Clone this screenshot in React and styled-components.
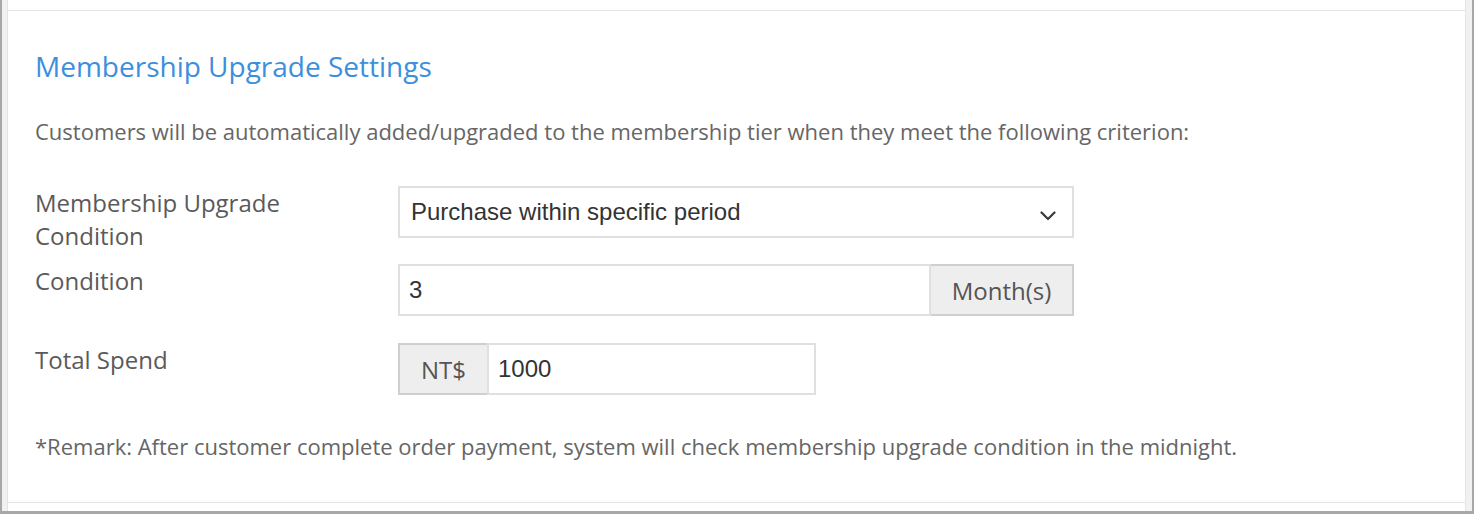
import React from 'react'
import styled, { createGlobalStyle } from 'styled-components'

const GlobalStyle = createGlobalStyle`
  html, body {
    margin: 0;
    padding: 0;
    background: #ffffff;
  }
  * {
    box-sizing: border-box;
  }
`

const Frame = styled.div`
  width: 1474px;
  height: 514px;
  overflow: hidden;
  background: #f1f1f1;
  border-left: 2px solid #a8a8a8;
  border-right: 2px solid #a8a8a8;
  border-bottom: 3px solid #a8a8a8;
  padding: 0 6px 0 5px;
  font-family: 'Open Sans', 'Liberation Sans', sans-serif;
`

const Card = styled.div`
  height: 100%;
  background: #ffffff;
  border-left: 1px solid #e4e4e4;
  border-right: 1px solid #e4e4e4;
`

const PrevSection = styled.div`
  height: 11px;
  border-bottom: 1px solid #e4e4e4;
`

const Section = styled.section`
  padding: 37px 27px 0;
  height: 492px;
  border-bottom: 1px solid #e4e4e4;
`

const Title = styled.h2`
  margin: 0;
  font-size: 28px;
  font-weight: 400;
  line-height: 36px;
  color: #3d8fdc;
`

const Description = styled.p`
  margin: 32px 0 0;
  font-size: 22px;
  line-height: 30px;
  color: #666666;
`

const Form = styled.div`
  margin-top: 40px;
  display: flex;
  flex-direction: column;
`

const Row = styled.div`
  display: flex;
  align-items: flex-start;
  margin-bottom: ${p => p.$gap || 0}px;
`

const Label = styled.div`
  width: 363px;
  flex-shrink: 0;
  font-size: 24px;
  line-height: 33px;
  color: #5a5a5a;
`

const Select = styled.div`
  width: 676px;
  height: 52px;
  display: flex;
  align-items: center;
  justify-content: space-between;
  padding: 0 16px 0 11px;
  border: 2px solid #e0e0e0;
  background: #ffffff;
  font-family: 'Liberation Sans', Arial, sans-serif;
  font-size: 24px;
  color: #333333;
`

const ChevronBox = styled.span`
  display: flex;
  margin-top: 8px;
`

const Group = styled.div`
  display: flex;
  width: ${p => p.$width}px;
  height: 52px;
`

const Input = styled.div`
  flex: 1;
  display: flex;
  align-items: center;
  padding: 0 9px;
  border: 2px solid #e0e0e0;
  background: #ffffff;
  font-family: 'Liberation Sans', Arial, sans-serif;
  font-size: 24px;
  color: #333333;
`

const Addon = styled.div`
  width: ${p => p.$width}px;
  flex-shrink: 0;
  display: flex;
  align-items: center;
  justify-content: center;
  background: #eeeeee;
  border: 2px solid #cfcfcf;
  ${p => (p.$side === 'left' ? 'border-right: none;' : 'border-left: none;')}
  font-size: 24px;
  color: #555555;
`

const Remark = styled.p`
  margin: 36px 0 0;
  font-size: 22px;
  line-height: 30px;
  color: #666666;
`

const Chevron = () => (
  <ChevronBox>
    <svg width="16" height="10" viewBox="0 0 16 10" fill="none">
      <path d="M1.5 1.5 L8 8 L14.5 1.5" stroke="#3a3a3a" strokeWidth="2.2" strokeLinecap="round" strokeLinejoin="round" />
    </svg>
  </ChevronBox>
)

export default function App() {
  return (
    <>
      <GlobalStyle />
      <Frame>
        <Card>
          <PrevSection />
          <Section>
            <Title>Membership Upgrade Settings</Title>
            <Description>
              Customers will be automatically added/upgraded to the membership tier when they meet the following criterion:
            </Description>
            <Form>
              <Row $gap={12}>
                <Label>Membership Upgrade<br />Condition</Label>
                <Select>
                  <span>Purchase within specific period</span>
                  <Chevron />
                </Select>
              </Row>
              <Row $gap={27}>
                <Label>Condition</Label>
                <Group $width={676}>
                  <Input>3</Input>
                  <Addon $width={143}>Month(s)</Addon>
                </Group>
              </Row>
              <Row>
                <Label>Total Spend</Label>
                <Group $width={418}>
                  <Addon $width={89} $side="left">NT$</Addon>
                  <Input>1000</Input>
                </Group>
              </Row>
            </Form>
            <Remark>
              *Remark: After customer complete order payment, system will check membership upgrade condition in the midnight.
            </Remark>
          </Section>
        </Card>
      </Frame>
    </>
  )
}
